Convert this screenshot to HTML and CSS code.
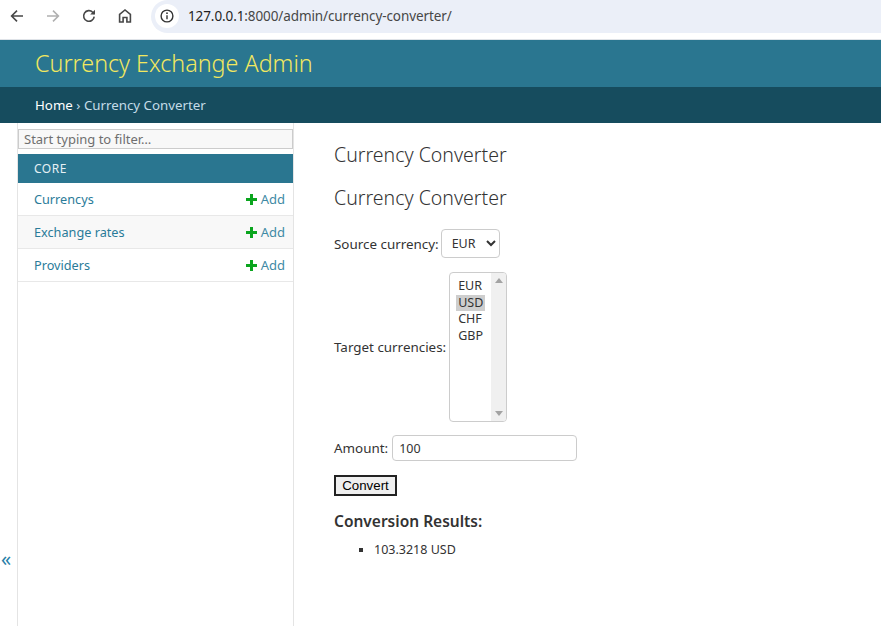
FILE: index.html
```html
<!DOCTYPE html>
<html lang="en">
<head>
<meta charset="utf-8">
<title>Currency Converter</title>
<link rel="stylesheet" href="styles.css">
</head>
<body>
<div class="chrome">
  <svg class="tb back" width="16" height="16" viewBox="0 0 16 16"><path d="M14 8H3M8 2.600 2.600 8 8 13.400" fill="none" stroke="#474747" stroke-width="1.600"/></svg>
  <svg class="tb fwd" width="16" height="16" viewBox="0 0 16 16"><path d="M2 8h11M8 2.600 13.400 8 8 13.400" fill="none" stroke="#b0b0b0" stroke-width="1.600"/></svg>
  <svg class="tb reload" width="16" height="16" viewBox="0 0 16 16"><path d="M13.200 8.600A5.300 5.300 0 1 1 11.700 4.200L13.400 6" fill="none" stroke="#474747" stroke-width="1.600"/><path d="M14 1.800V6.600H9.200Z" fill="#474747"/></svg>
  <svg class="tb home" width="16" height="16" viewBox="0 0 16 16"><path d="M2.600 14V6.400L8 2l5.400 4.400V14H9.900V9.500H6.100V14Z" fill="none" stroke="#474747" stroke-width="1.600"/></svg>
  <div class="omnibox">
    <span class="info"><svg width="14" height="14" viewBox="0 0 14 14"><circle cx="7" cy="7" r="5.900" fill="none" stroke="#333" stroke-width="1.400"/><path d="M7 6.200v4" stroke="#333" stroke-width="1.400"/><circle cx="7" cy="4.200" r=".9" fill="#333"/></svg></span>
    <span class="url">127.0.0.1<span class="url-dim">:8000/admin/currency-converter/</span></span>
  </div>
</div>
<header class="site-header"><a class="brand">Currency Exchange Admin</a></header>
<nav class="crumbs"><a class="crumb-home">Home</a> › Currency Converter</nav>
<div class="main">
  <div class="toggle-rail"><span class="toggle">«</span></div>
  <aside class="sidebar">
    <input class="filter" type="text" placeholder="Start typing to filter…">
    <div class="app-title">CORE</div>
    <div class="model"><a class="model-name">Currencys</a><a class="add"><svg class="plus" width="11" height="11" viewBox="0 0 11 11"><path d="M0 5.500h11M5.500 0v11" stroke="#0aa51e" stroke-width="3"/></svg>Add</a></div>
    <div class="model alt"><a class="model-name">Exchange rates</a><a class="add"><svg class="plus" width="11" height="11" viewBox="0 0 11 11"><path d="M0 5.500h11M5.500 0v11" stroke="#0aa51e" stroke-width="3"/></svg>Add</a></div>
    <div class="model"><a class="model-name">Providers</a><a class="add"><svg class="plus" width="11" height="11" viewBox="0 0 11 11"><path d="M0 5.500h11M5.500 0v11" stroke="#0aa51e" stroke-width="3"/></svg>Add</a></div>
  </aside>
  <main class="content">
    <h1 class="title">Currency Converter</h1>
    <h2 class="title second">Currency Converter</h2>
    <form class="form">
      <p class="row row-source"><label>Source currency:</label> <select class="single"><option>EUR</option><option>USD</option></select></p>
      <div class="row row-target"><label>Target currencies:</label>
        <div class="multi" role="listbox" aria-multiselectable="true">
          <div class="options">
            <div class="option" role="option">EUR</div>
            <div class="option selected" role="option" aria-selected="true">USD</div>
            <div class="option" role="option">CHF</div>
            <div class="option" role="option">GBP</div>
          </div>
          <div class="scrollbar"><span class="arrow up"></span><span class="arrow down"></span></div>
        </div>
      </div>
      <p class="row row-amount"><label>Amount:</label> <input class="amount" type="text" value="100"></p>
      <button class="convert" type="button">Convert</button>
    </form>
    <h3 class="results">Conversion Results:</h3>
    <ul class="result-list"><li>103.3218 USD</li></ul>
  </main>
</div>
</body>
</html>
```
FILE: styles.css
```css
* { box-sizing: border-box; }
html, body { margin: 0; height: 626px; overflow: hidden; background: #fff; }
body { font-family: "Noto Sans", sans-serif; font-size: 14px; color: #333; display: flex; flex-direction: column; }
.chrome { height: 40px; flex: none; display: flex; align-items: center; padding-bottom: 7px; background: #fff; border-bottom: 1px solid #dfe3e8; }
.tb { flex: none; }
.back { margin-left: 9px; }
.fwd { margin-left: 20px; }
.reload { margin-left: 20px; }
.home { margin-left: 20px; }
.omnibox { margin-left: 18px; flex: 1; height: 33px; background: #ebeff8; border-radius: 17px 0 0 17px; display: flex; align-items: center; padding-left: 4px; }
.info { width: 24px; height: 24px; background: #fff; border-radius: 50%; display: flex; align-items: center; justify-content: center; margin-right: 9px; }
.url { font-size: 13.500px; letter-spacing: -.1px; color: #1f1f1f; }
.url-dim { color: #474747; }
.site-header { height: 47px; flex: none; background: #2a7690; padding: 0 35px 1px; display: flex; align-items: center; }
.brand { font-size: 23.300px; font-weight: 300; color: #f2e85f; }
.crumbs { height: 36px; flex: none; background: #164c5e; padding: 0 35px 1px; color: #c4dce8; font-size: 13.300px; display: flex; align-items: center; white-space: pre; }
.crumb-home { color: #fff; }
.main { flex: 1; display: flex; min-height: 0; }
.toggle-rail { width: 18px; flex: none; border-right: 1px solid #e4e4e4; position: relative; }
.toggle { position: absolute; left: 1px; top: 424px; font-size: 20px; line-height: 24px; color: #2a7fa8; }
.sidebar { width: 276px; flex: none; border-right: 1px solid #e4e4e4; }
.filter { display: block; width: 275px; height: 20px; margin: 6px 0 5px; padding: 0 5px; font: 13px "Noto Sans", sans-serif; background: #f8f8f8; border: 1px solid #ccc; color: #333; outline: none; }
.filter::placeholder { color: #6f6f6f; }
.app-title { height: 29px; background: #2a7690; color: #e6f0f4; padding-left: 16px; font-size: 12px; letter-spacing: .5px; line-height: 29px; }
.model { height: 33px; display: flex; align-items: center; justify-content: space-between; padding: 0 8px 0 16px; border-bottom: 1px solid #e8e8e8; font-size: 12.700px; color: #2a7b99; }
.alt { background: #f8f8f8; }
.add { display: flex; align-items: center; font-size: 13px; color: #3f8aa5; }
.plus { margin-right: 4px; }
.content { flex: 1; padding: 20px 40px 0; }
.title { font-size: 19.500px; font-weight: 300; color: #333; margin: 0; line-height: 24px; }
.second { margin-top: 19px; }
.row { margin: 0; display: flex; align-items: center; font-size: 13.400px; }
.row-source { margin-top: 19px; gap: 2px; }
.row-target { margin-top: 14px; gap: 3px; }
.row-amount { margin-top: 13px; gap: 4px; }
.single { height: 29px; width: 59px; font: 12.500px "Noto Sans", sans-serif; color: #333; background: #fff; border: 1px solid #ccc; border-radius: 4px; padding: 0 6px; }
.multi { width: 58px; height: 150px; display: flex; justify-content: space-between; font-size: 12.500px; color: #333; background: #fff; border: 1px solid #ccc; border-radius: 4px; overflow: hidden; }
.options { padding: 5px 0 0 6px; }
.option { height: 16.600px; line-height: 16.600px; padding: 0 2px; }
.selected { background: #cecece; }
.scrollbar { width: 15px; background: #f0f0f0; display: flex; flex-direction: column; justify-content: space-between; align-items: center; padding: 5px 0; }
.arrow { width: 0; height: 0; border-left: 4px solid transparent; border-right: 4px solid transparent; }
.up { border-bottom: 5px solid #a3a3a3; }
.down { border-top: 5px solid #a3a3a3; }
.amount { width: 185px; height: 26px; font: 12.500px "Noto Sans", sans-serif; color: #333; border: 1px solid #ccc; border-radius: 4px; padding: 0 6px; outline: none; }
.convert { display: block; margin-top: 14px; width: 63px; height: 21px; padding: 0; font: 13.300px "Liberation Sans", sans-serif; color: #000; background: #efefef; border: 2px solid #222; border-radius: 0; }
.results { margin: 15px 0 0; font-size: 15.500px; line-height: 20px; font-weight: 600; color: #333; }
.result-list { margin: 10px 0 0; padding-left: 40px; list-style: square; font-size: 12.500px; line-height: 18px; }
```
